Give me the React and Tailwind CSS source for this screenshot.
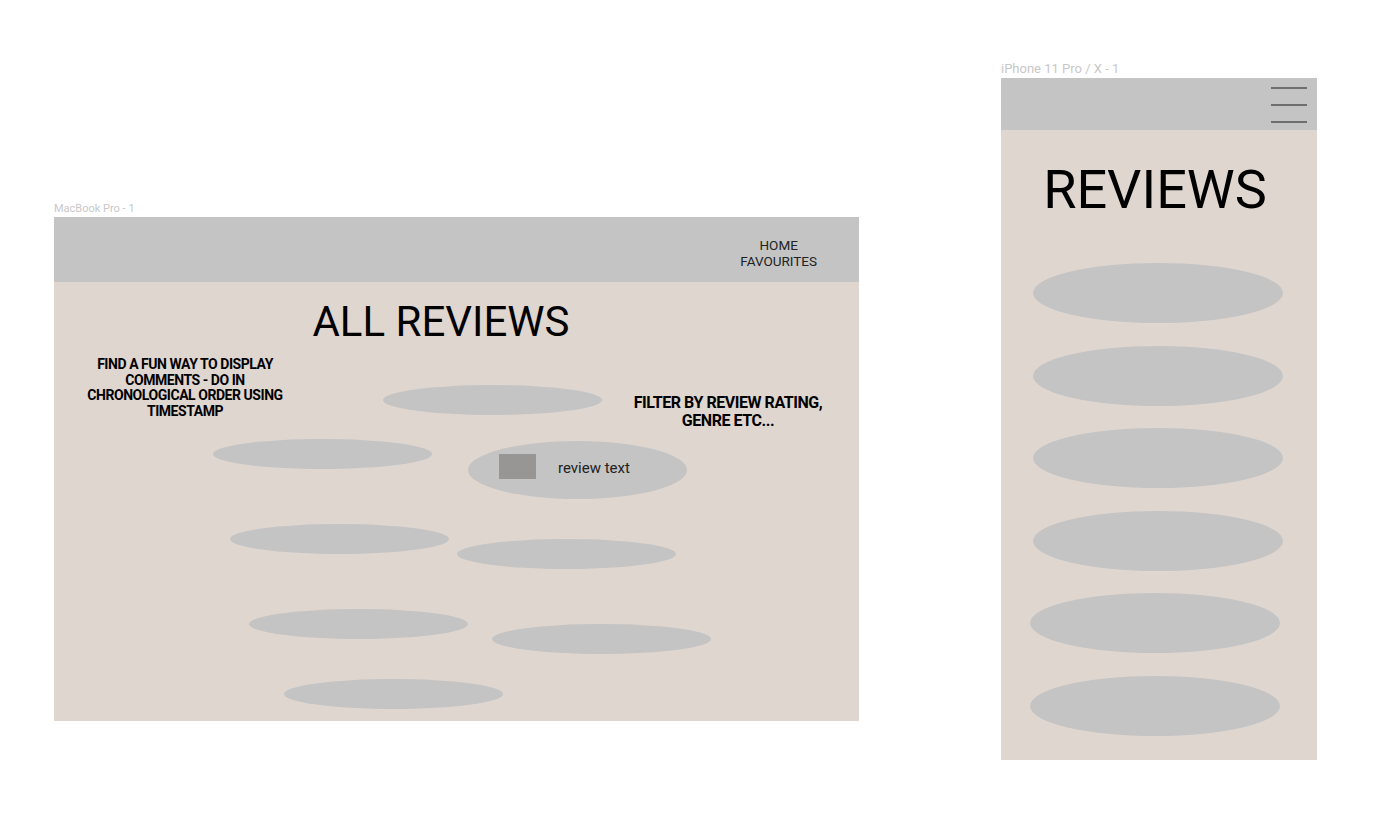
import React from 'react';

// Scattered review bubbles on the desktop frame (canvas positions relative to frame body)
const desktopBubbles = [
  { left: 329, top: 103 },
  { left: 159, top: 157 },
  { left: 176, top: 242 },
  { left: 403, top: 257 },
  { left: 195, top: 327 },
  { left: 438, top: 342 },
  { left: 230, top: 397 },
];

const mobileBubbles = [0, 0, 0, 0, -3, -3];

const Bubble = ({ left, top }) => (
  <div
    className="absolute w-[219px] h-[30px] rounded-[50%] bg-[#c4c4c4]"
    style={{ left, top }}
  />
);

const DesktopFrame = () => (
  <div className="absolute left-[54px] top-[201px]">
    <div className="text-[11px] leading-[16px] h-[16px] text-[#c8c8c8]">MacBook Pro - 1</div>
    <div className="w-[805px] h-[504px] flex flex-col">
      {/* Header */}
      <div className="h-[65px] bg-[#c4c4c4] flex justify-end items-center pr-[42px]">
        <div className="text-[13.5px] leading-[16px] text-[#222] text-center mt-[6px]">
          <div>HOME</div>
          <div>FAVOURITES</div>
        </div>
      </div>
      {/* Body */}
      <div className="flex-1 bg-[#e0d6d0] relative">
        <h1 className="absolute left-0 w-[774px] top-[15px] text-center text-[42px] leading-[50px] text-black">
          ALL REVIEWS
        </h1>
        <p className="absolute left-[26px] w-[210px] top-[75px] text-center text-[14px] leading-[15.7px] font-bold tracking-[-0.45px] text-black">
          FIND A FUN WAY TO DISPLAY COMMENTS - DO IN CHRONOLOGICAL ORDER USING TIMESTAMP
        </p>
        <p className="absolute left-[563px] w-[222px] top-[112px] text-center text-[16px] leading-[18px] font-bold tracking-[-0.45px] text-black">
          FILTER BY REVIEW RATING, GENRE ETC...
        </p>
        {desktopBubbles.map((b, i) => (
          <Bubble key={i} {...b} />
        ))}
        {/* Featured review bubble */}
        <div className="absolute left-[414px] top-[159px] w-[219px] h-[58px] rounded-[50%] bg-[#c4c4c4] flex items-start pl-[31px]">
          <div className="w-[37px] h-[25px] mt-[13px] bg-[#979695]" />
          <span className="ml-[22px] mt-[18px] text-[15px] leading-[18px] text-[#222]">review text</span>
        </div>
      </div>
    </div>
  </div>
);

const MobileFrame = () => (
  <div className="absolute left-[1001px] top-[60px]">
    <div className="text-[13px] leading-[16px] h-[18px] text-[#c8c8c8] pt-[1px]">iPhone 11 Pro / X - 1</div>
    <div className="w-[316px] h-[682px] flex flex-col">
      <div className="h-[52px] bg-[#c4c4c4] flex justify-end pr-[10px] pt-[9px]">
        <div className="w-[36px] flex flex-col gap-[15.5px]">
          <div className="h-[1.5px] bg-[#6e6e6e]" />
          <div className="h-[1.5px] bg-[#6e6e6e]" />
          <div className="h-[1.5px] bg-[#6e6e6e]" />
        </div>
      </div>
      <div className="flex-1 bg-[#e0d6d0] flex flex-col">
        <h1 className="text-center text-[54px] leading-[60px] mt-[30px] pr-[8px] text-black">REVIEWS</h1>
        <div className="flex flex-col gap-[22.6px] mt-[43px]">
          {mobileBubbles.map((dx, i) => (
            <div
              key={i}
              className="w-[250px] h-[60px] rounded-[50%] bg-[#c4c4c4]"
              style={{ marginLeft: 32 + dx }}
            />
          ))}
        </div>
      </div>
    </div>
  </div>
);

const App = () => {
  return (
    <div className="w-[1380px] h-[816px] bg-white relative overflow-hidden font-['Roboto',_'Liberation_Sans',sans-serif]">
      <DesktopFrame />
      <MobileFrame />
    </div>
  );
};

export default App;
